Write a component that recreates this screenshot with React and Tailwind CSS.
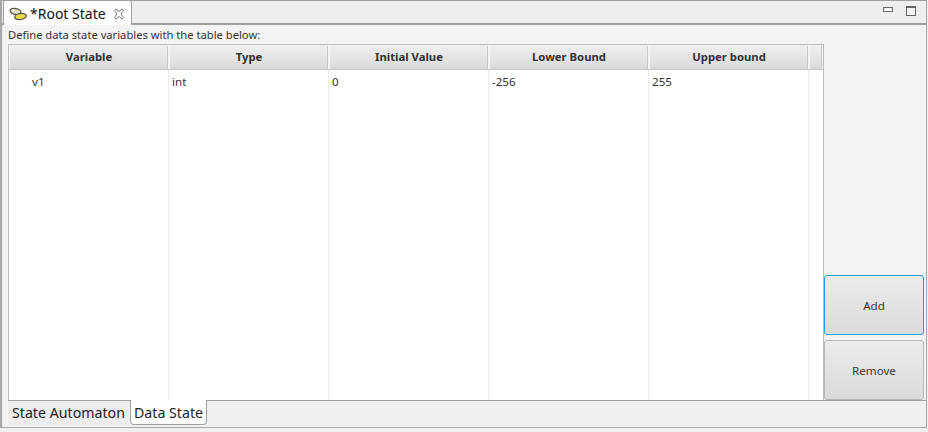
const font = { fontFamily: '"Noto Sans", "Open Sans", sans-serif' };

function Header({ children, w = "w-[160px]" }) {
  return (
    <div className={`${w} h-full shrink-0 border-r border-[#f4f4f4] border-l border-l-[#f4f4f4] border-t border-t-[#f0f0f0] bg-gradient-to-b from-[#efefef] to-[#dadada] flex items-center justify-center pb-[1px] text-[11.3px] font-bold text-[#333] shadow-[inset_-1px_0_0_#c8c8c8]`}>
      {children}
    </div>
  );
}

function Cell({ children, className = "pl-[3px]" }) {
  return (
    <div className={`w-[160px] shrink-0 h-full border-r border-[#ebebeb] text-[11.6px] text-[#333] pt-[3px] ${className}`}>
      {children}
    </div>
  );
}

function Btn({ children, className = "" }) {
  return (
    <button className={`w-[100px] h-[60px] rounded-[3px] bg-gradient-to-b from-[#ececec] to-[#dadada] text-[11.6px] text-[#3a3a3a] flex items-center justify-center pt-[2px] ${className}`}>
      {children}
    </button>
  );
}

export default function App() {
  return (
    <div style={font} className="w-[928px] h-[432px] bg-[#f0f0f0] overflow-hidden">
      <div className="w-[927px] h-[428px] border-2 border-t-0 border-[#a8a8a8] border-b border-r flex flex-col bg-[#f0f0f0]">
        {/* top bar */}
        <div className="h-[25px] shrink-0 flex items-start border-b-2 border-t border-[#a0a0a0] bg-[#eeeeee] relative">
          <div className="ml-[1px] w-[129px] h-[25px] -mt-[1px] bg-white border border-b-0 border-[#a0a0a0] rounded-t-[3px] flex items-center pl-[5px] pt-[1px] relative z-10">
            <svg width="18" height="14" viewBox="0 0 18 14" className="shrink-0">
              <ellipse cx="6.5" cy="4.5" rx="5.5" ry="3" transform="rotate(12 6.5 4.5)" fill="#e4e4c0" stroke="#4a4a4a" strokeWidth="1.2" />
              <ellipse cx="11.5" cy="9.5" rx="5.8" ry="3" transform="rotate(-8 11.5 9.5)" fill="#ead84a" stroke="#4a4a4a" strokeWidth="1.2" />
            </svg>
            <span className="ml-[3px] text-[14px] leading-none text-[#111] whitespace-nowrap">*Root State</span>
            <svg width="12" height="12" viewBox="0 0 12 12" className="ml-[7px] shrink-0">
              <path d="M1.5 2.5 L3 1 L6 3.5 L9 1 L10.5 2.5 L8 6 L10.5 9.5 L9 11 L6 8.5 L3 11 L1.5 9.5 L4 6 Z" fill="#fafafa" stroke="#777" strokeWidth="1" />
            </svg>
          </div>
          <div className="ml-auto flex items-start pt-[5px] pr-[10px] gap-[13px]">
            <div className="w-[10px] h-[5px] border border-[#666] bg-white mt-[1px]" />
            <div className="w-[10px] h-[10px] border border-[#666] border-t-2 bg-[#f4f4f4]" />
          </div>
        </div>
        {/* body */}
        <div className="flex-1 min-h-0 flex flex-col bg-[#f3f3f3] border-l border-[#e8e8e8] pl-[5px]">
          <div className="h-[19px] shrink-0 text-[11.2px] leading-[20px] text-[#333] whitespace-nowrap">
            Define data state variables with the table below:
          </div>
          <div className="h-[356px] shrink-0 flex">
            <div className="w-[816px] h-full shrink-0 border border-b-0 border-[#bdbdbd] bg-white flex flex-col">
              <div className="h-[25px] shrink-0 flex border-b border-[#c4c4c4]">
                <Header>Variable</Header>
                <Header>Type</Header>
                <Header>Initial Value</Header>
                <Header>Lower Bound</Header>
                <Header>Upper bound</Header>
                <Header w="flex-1" />
              </div>
              <div className="flex-1 flex">
                <Cell className="pl-[23px]">v1</Cell>
                <Cell>int</Cell>
                <Cell>0</Cell>
                <Cell>-256</Cell>
                <Cell>255</Cell>
              </div>
            </div>
            <div className="flex-1 flex flex-col justify-end gap-[5px]">
              <Btn className="border border-[#19a3d6]">Add</Btn>
              <Btn className="border border-[#b8b8b8]">Remove</Btn>
            </div>
          </div>
          <div className="flex-1 border-t border-[#a0a0a0] flex items-start bg-[#f0f0f0]">
            <div className="w-[121px] h-[24px] bg-[#ececec] flex items-center pl-[4px] pb-[1px] text-[14.2px] text-[#222] whitespace-nowrap">State Automaton</div>
            <div className="ml-[1px] -mt-[1px] w-[77px] h-[25px] bg-white border border-t-0 border-[#a0a0a0] rounded-b-[4px] flex items-center pl-[3px] pt-[1px] text-[14.2px] text-[#222] whitespace-nowrap">Data State</div>
          </div>
        </div>
      </div>
    </div>
  );
}
